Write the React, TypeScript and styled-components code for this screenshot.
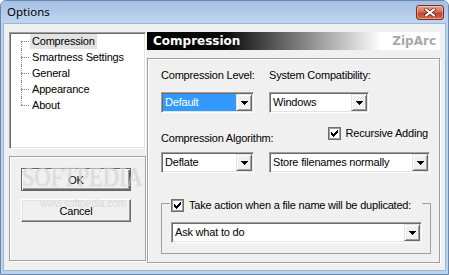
import React from 'react';
import styled, { createGlobalStyle, css } from 'styled-components';

const GlobalStyle = createGlobalStyle`
  html, body {
    margin: 0;
    padding: 0;
    background: #ffffff;
  }
  body {
    font-family: 'Liberation Sans', Arial, sans-serif;
    font-size: 11px;
    letter-spacing: -0.2px;
    color: #000;
  }
  * {
    box-sizing: border-box;
  }
`;

const Window = styled.div`
  width: 449px;
  height: 275px;
  display: flex;
  flex-direction: column;
  background: #bcd3ee;
  border: 1px solid #6a88ad;
  border-radius: 6px 6px 0 0;
  padding: 0 2px 3px;
`;

const TitleBar = styled.div`
  height: 22px;
  flex: none;
  display: flex;
  align-items: flex-start;
  justify-content: space-between;
  margin: 0 -2px;
  padding: 0 4px 0 6px;
  background: linear-gradient(#a4c0e2, #bfd5ef);
  border-radius: 5px 5px 0 0;
`;

const TitleText = styled.span`
  font-family: 'Noto Sans', 'Open Sans', sans-serif;
  font-size: 11.5px;
  letter-spacing: 0;
  line-height: 22px;
`;

const CloseButton = styled.div`
  width: 28px;
  height: 15px;
  margin-top: 4px;
  display: flex;
  align-items: center;
  justify-content: center;
  border: 1px solid #7e2a1d;
  border-radius: 3px;
  background: linear-gradient(#e7a595, #d46d58 45%, #c2432c 55%, #d8694f);
  box-shadow: inset 0 0 0 1px rgba(255, 255, 255, 0.35);
`;

const Body = styled.div`
  flex: 1;
  display: flex;
  align-items: flex-start;
  gap: 1px;
  background: #f0f0f0;
  border: 1px solid #9fb6d3;
  padding: 8px 5px 7px;
`;

const Sidebar = styled.div`
  width: 137px;
  display: flex;
  flex-direction: column;
  gap: 7px;
`;

const sunken = css`
  border: 1px solid;
  border-color: #a0a0a0 #ffffff #ffffff #a0a0a0;
  box-shadow: inset 1px 1px 0 #696969, inset -1px -1px 0 #e3e3e3;
`;

const etched = css`
  border: 1px solid #a0a0a0;
  box-shadow: inset 1px 1px 0 #ffffff, 1px 1px 0 #ffffff;
`;

const TreeBox = styled.div`
  height: 117px;
  background: #ffffff;
  ${sunken};
`;

const TreeList = styled.ul`
  list-style: none;
  margin: 0;
  padding: 0;
`;

const TreeItem = styled.li<{ $pos: 'first' | 'middle' | 'last' }>`
  position: relative;
  height: 16px;
  padding-left: 20px;

  &::before {
    content: '';
    position: absolute;
    left: 11px;
    top: 8px;
    width: 8px;
    border-top: 1px dotted #8a8a8a;
  }

  &::after {
    content: '';
    position: absolute;
    left: 11px;
    top: ${(p) => (p.$pos === 'first' ? '8px' : '0')};
    height: ${(p) => (p.$pos === 'middle' ? '16px' : '8px')};
    border-left: 1px dotted #8a8a8a;
  }
`;

const TreeLabel = styled.span<{ $selected?: boolean }>`
  display: inline-block;
  height: 15px;
  line-height: 15px;
  margin-top: 1px;
  padding: 0 2px;
  white-space: nowrap;
  background: ${(p) => (p.$selected ? '#e3e3e3' : 'transparent')};
`;

const ButtonBox = styled.div`
  position: relative;
  height: 105px;
  display: flex;
  flex-direction: column;
  align-items: flex-start;
  gap: 8px;
  padding: 11px 0 0 11px;
  ${etched};
`;

const PushButton = styled.button<{ $default?: boolean }>`
  width: 110px;
  height: 23px;
  padding: 0;
  font: inherit;
  letter-spacing: inherit;
  color: #000;
  background: #f0f0f0;
  border: 1px solid;
  border-color: #ffffff #696969 #696969 #ffffff;
  box-shadow: inset -1px -1px 0 #a0a0a0, inset 1px 1px 0 #e3e3e3;
  ${(p) =>
    p.$default &&
    css`
      border-color: #646464;
      box-shadow: inset 1px 1px 0 #ffffff, inset -1px -1px 0 #696969,
        inset -2px -2px 0 #a0a0a0;
    `}
`;

const Watermark = styled.div`
  position: absolute;
  left: 12px;
  top: 6px;
  pointer-events: none;
  font-family: 'Liberation Serif', 'Times New Roman', serif;
  font-size: 28px;
  line-height: 28px;
  letter-spacing: 0;
  color: rgba(255, 255, 255, 0.35);
  text-shadow: 0 0 1px rgba(170, 170, 170, 0.6);
  transform: scaleX(0.8);
  transform-origin: left top;
  white-space: nowrap;
`;

const WatermarkUrl = styled.div`
  position: absolute;
  left: 30px;
  top: 41px;
  pointer-events: none;
  font-size: 10px;
  letter-spacing: 0;
  color: rgba(200, 200, 200, 0.6);
  white-space: nowrap;
`;

const Content = styled.div`
  width: 293px;
  display: flex;
  flex-direction: column;
  gap: 8px;
`;

const Header = styled.div`
  height: 18px;
  display: flex;
  align-items: center;
  justify-content: space-between;
  padding: 0 4px 0 6px;
  background: linear-gradient(90deg, #000000 0%, #0a0a0a 27%, #ffffff 80%);
  font-family: 'DejaVu Sans', Verdana, sans-serif;
  font-weight: bold;
  font-size: 12px;
  letter-spacing: 0;
`;

const HeaderTitle = styled.span`
  color: #ffffff;
`;

const Brand = styled.span`
  color: #a8a8a8;
`;

const Panel = styled.div`
  height: 205px;
  display: flex;
  flex-direction: column;
  align-items: flex-start;
  padding: 9px 0 0 13px;
  ${etched};
`;

const Row = styled.div<{ $mt?: number }>`
  display: flex;
  align-items: flex-end;
  gap: 15px;
  margin-top: ${(p) => p.$mt ?? 0}px;
`;

const Label = styled.div<{ $w: number }>`
  width: ${(p) => p.$w}px;
  line-height: 14px;
  white-space: nowrap;
`;

const CheckCell = styled.div<{ $w: number }>`
  width: ${(p) => p.$w}px;
  display: flex;
  justify-content: flex-end;
  padding-right: 2px;
  margin-bottom: 5px;
`;

const CheckRow = styled.div`
  display: flex;
  align-items: center;
  gap: 5px;
  line-height: 13px;
  white-space: nowrap;
`;

const CheckBox = styled.span`
  width: 13px;
  height: 13px;
  flex: none;
  display: inline-flex;
  align-items: center;
  justify-content: center;
  background: #ffffff;
  border: 1px solid #6e6e6e;
  box-shadow: inset 0 0 0 1px #9c9c9c;
`;

const ComboBox = styled.div<{ $w: number }>`
  width: ${(p) => p.$w}px;
  height: 21px;
  flex: none;
  display: flex;
  padding: 1px;
  background: #ffffff;
  ${sunken};
`;

const ComboText = styled.span<{ $selected?: boolean }>`
  flex: 1;
  padding-left: 2px;
  line-height: 17px;
  white-space: nowrap;
  overflow: hidden;
  color: ${(p) => (p.$selected ? '#ffffff' : '#000000')};
  background: ${(p) => (p.$selected ? '#3399ff' : 'transparent')};
`;

const DropButton = styled.span`
  width: 16px;
  flex: none;
  display: flex;
  align-items: center;
  justify-content: center;
  background: #f0f0f0;
  border: 1px solid;
  border-color: #e3e3e3 #696969 #696969 #e3e3e3;
  box-shadow: inset 1px 1px 0 #ffffff, inset -1px -1px 0 #a0a0a0;
`;

const Group = styled.fieldset`
  width: 270px;
  min-width: 0;
  margin: 26px 0 0;
  padding: 0 8px 10px;
  border: 1px solid #a0a0a0;
`;

const GroupLegend = styled.legend`
  height: 8px;
  padding: 0 11px 0 1px;
`;

const GroupCombo = styled.div`
  margin: 15px 0 0 1px;
`;

const CheckMark = () => (
  <svg width="7" height="7" viewBox="0 0 7 7" shapeRendering="crispEdges">
    <path
      d="M0 2h1v3H0z M1 3h1v3H1z M2 4h1v3H2z M3 3h1v3H3z M4 2h1v3H4z M5 1h1v3H5z M6 0h1v3H6z"
      fill="#000"
    />
  </svg>
);

const Arrow = () => (
  <svg width="7" height="4" viewBox="0 0 7 4" shapeRendering="crispEdges">
    <path d="M0 0h7v1H0z M1 1h5v1H1z M2 2h3v1H2z M3 3h1v1H3z" fill="#000" />
  </svg>
);

const CloseGlyph = () => (
  <svg width="12" height="9" viewBox="0 0 12 9">
    <path d="M2 1.5 L10 7.5 M10 1.5 L2 7.5" stroke="#5a1c12" strokeWidth="3.4" strokeLinecap="square" />
    <path d="M2 1.5 L10 7.5 M10 1.5 L2 7.5" stroke="#ffffff" strokeWidth="2" strokeLinecap="square" />
  </svg>
);

const Combo: React.FC<{ width: number; value: string; selected?: boolean }> = ({
  width,
  value,
  selected,
}) => (
  <ComboBox $w={width}>
    <ComboText $selected={selected}>{value}</ComboText>
    <DropButton>
      <Arrow />
    </DropButton>
  </ComboBox>
);

const Check: React.FC<{ label: string }> = ({ label }) => (
  <CheckRow>
    <CheckBox>
      <CheckMark />
    </CheckBox>
    <span>{label}</span>
  </CheckRow>
);

const pages = ['Compression', 'Smartness Settings', 'General', 'Appearance', 'About'];

const App: React.FC = () => (
  <>
    <GlobalStyle />
    <Window>
      <TitleBar>
        <TitleText>Options</TitleText>
        <CloseButton>
          <CloseGlyph />
        </CloseButton>
      </TitleBar>
      <Body>
        <Sidebar>
          <TreeBox>
            <TreeList>
              {pages.map((page, i) => (
                <TreeItem
                  key={page}
                  $pos={i === 0 ? 'first' : i === pages.length - 1 ? 'last' : 'middle'}
                >
                  <TreeLabel $selected={i === 0}>{page}</TreeLabel>
                </TreeItem>
              ))}
            </TreeList>
          </TreeBox>
          <ButtonBox>
            <PushButton $default>OK</PushButton>
            <PushButton>Cancel</PushButton>
            <Watermark>SOFTPEDIA</Watermark>
            <WatermarkUrl>www.softpedia.com</WatermarkUrl>
          </ButtonBox>
        </Sidebar>
        <Content>
          <Header>
            <HeaderTitle>Compression</HeaderTitle>
            <Brand>ZipArc</Brand>
          </Header>
          <Panel>
            <Row>
              <Label $w={93}>Compression Level:</Label>
              <Label $w={161}>System Compatibility:</Label>
            </Row>
            <Row $mt={10}>
              <Combo width={93} value="Default" selected />
              <Combo width={100} value="Windows" />
            </Row>
            <Row $mt={14}>
              <Label $w={93}>Compression Algorithm:</Label>
              <CheckCell $w={161}>
                <Check label="Recursive Adding" />
              </CheckCell>
            </Row>
            <Row $mt={7}>
              <Combo width={93} value="Deflate" />
              <Combo width={161} value="Store filenames normally" />
            </Row>
            <Group>
              <GroupLegend>
                <Check label="Take action when a file name will be duplicated:" />
              </GroupLegend>
              <GroupCombo>
                <Combo width={251} value="Ask what to do" />
              </GroupCombo>
            </Group>
          </Panel>
        </Content>
      </Body>
    </Window>
  </>
);

export default App;
